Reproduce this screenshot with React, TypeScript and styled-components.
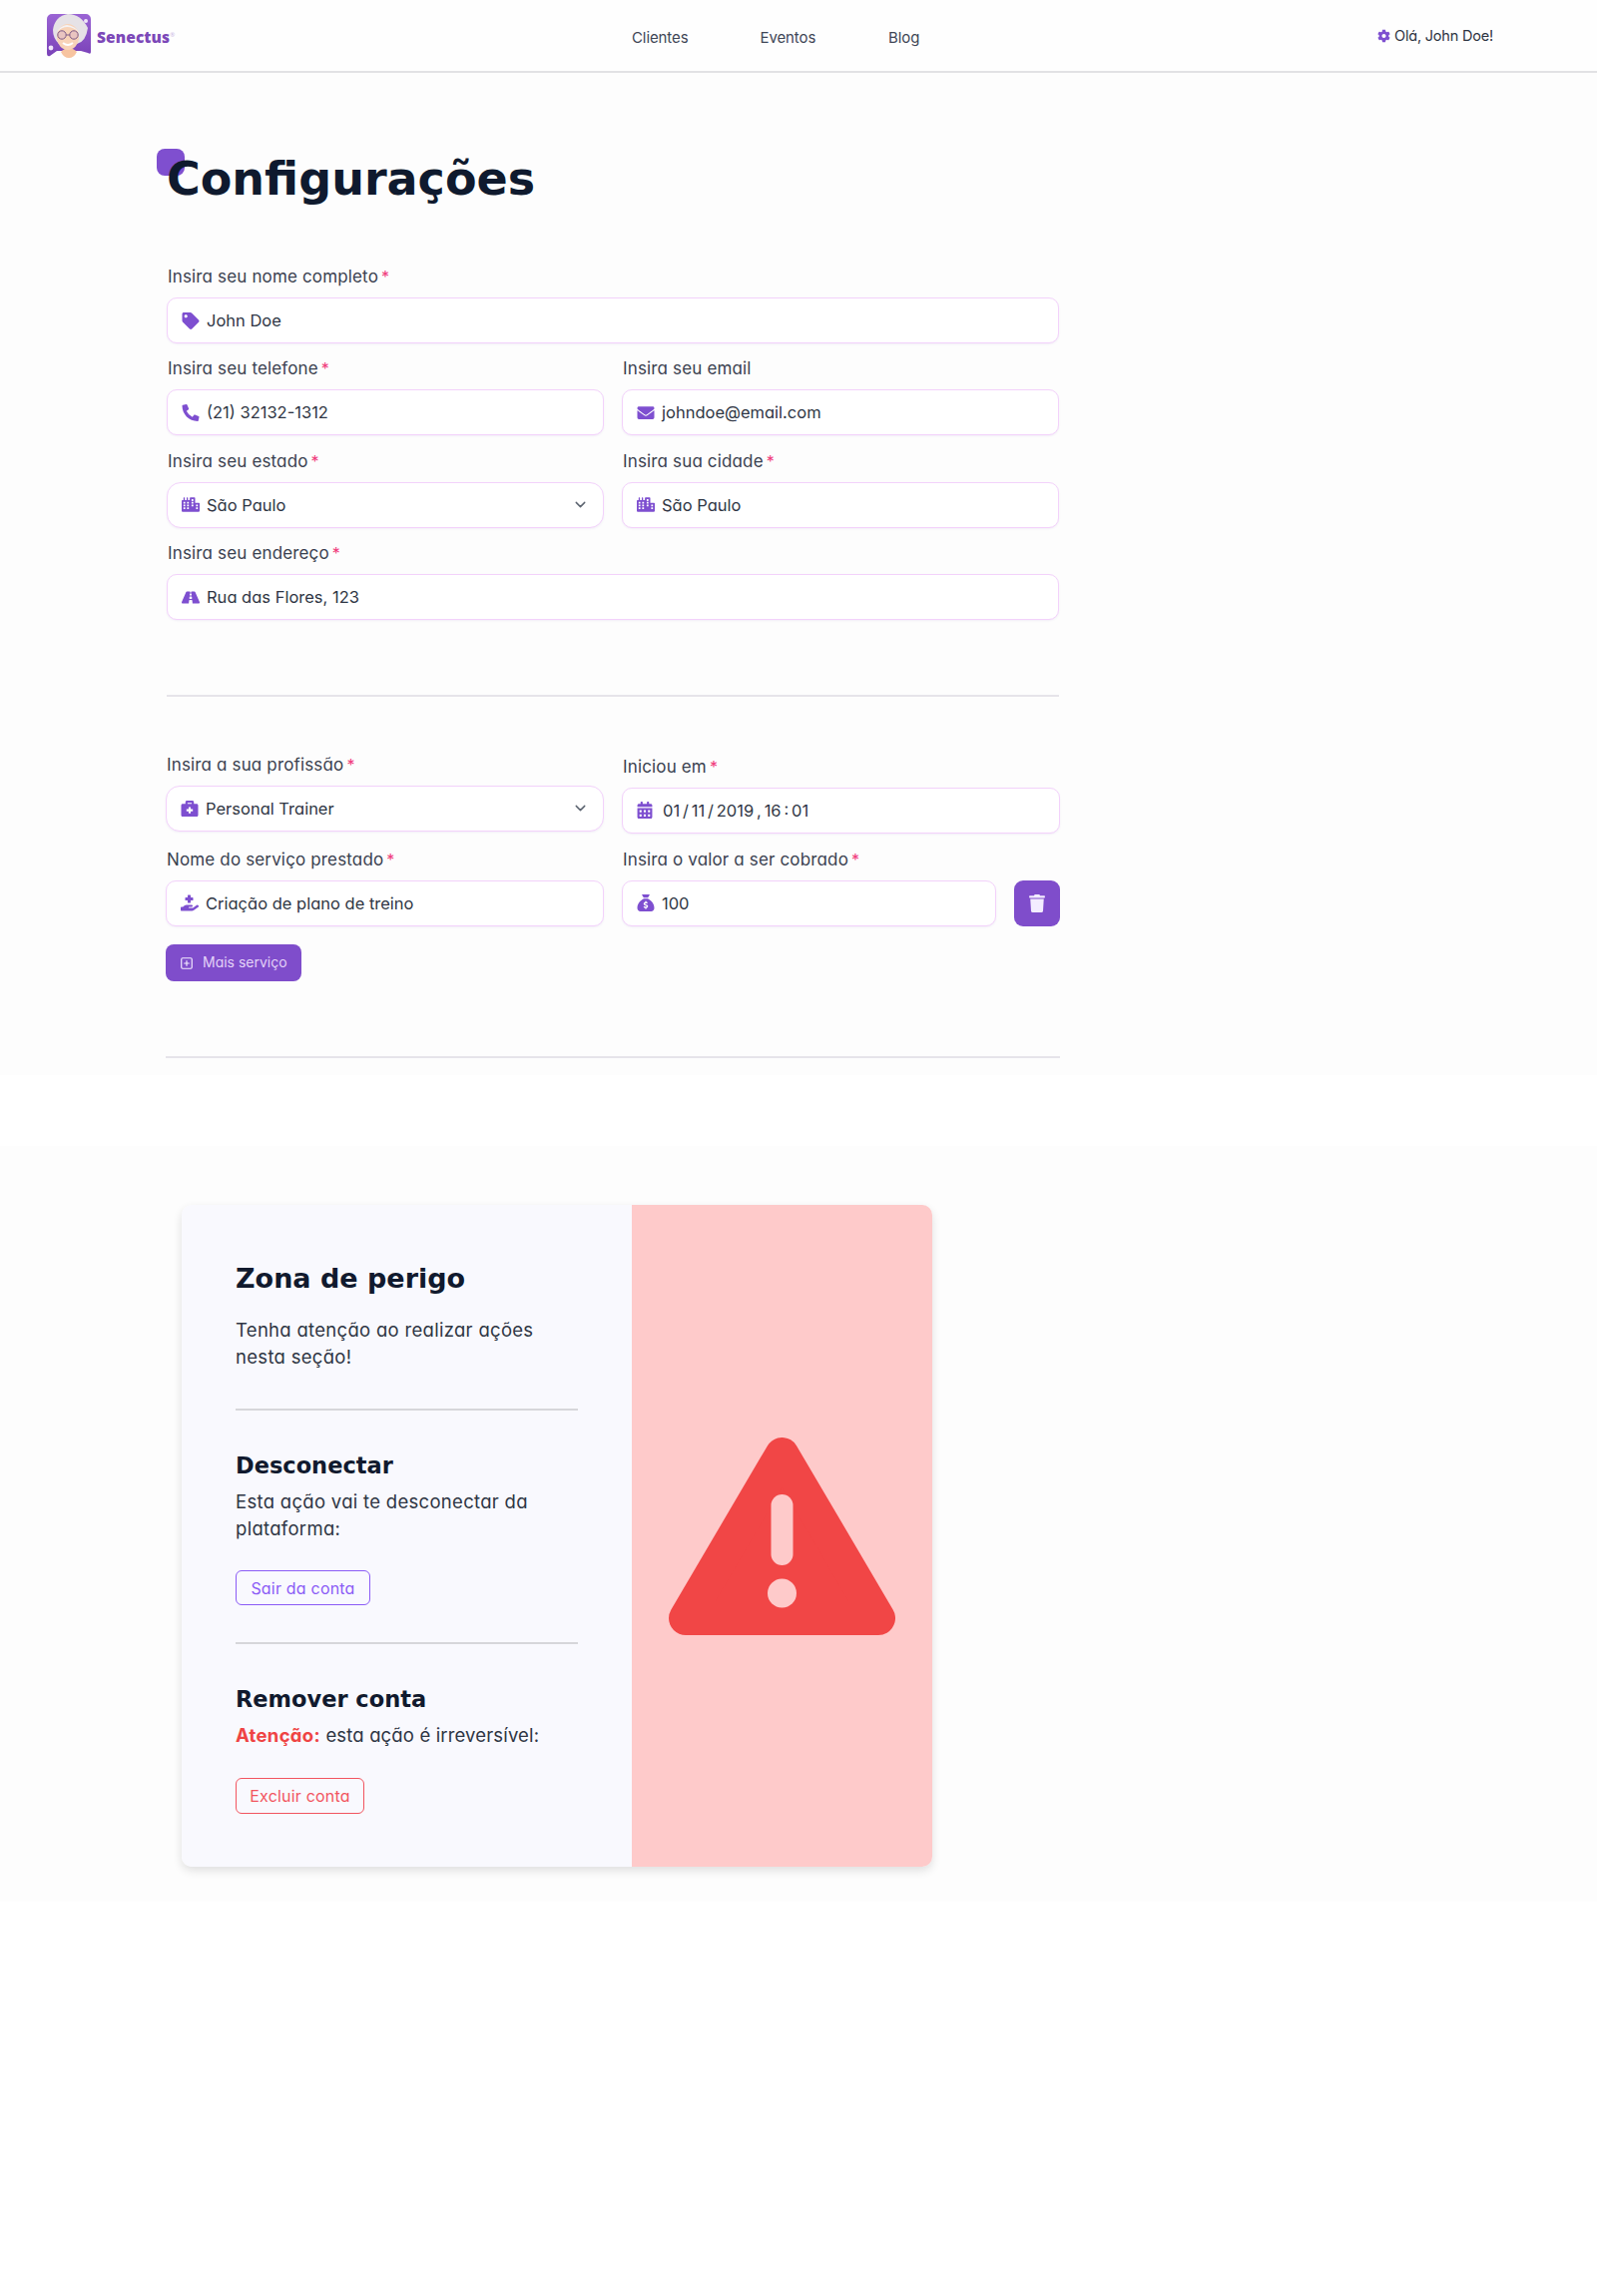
import React from "react";
import styled, { createGlobalStyle } from "styled-components";
import { FaTag, FaPhoneAlt, FaCity, FaRoad, FaEnvelope, FaBriefcaseMedical, FaHandHoldingMedical, FaCalendarAlt, FaTrash, FaCog } from "react-icons/fa";
import { FaSackDollar } from "react-icons/fa6";
import { FiPlusSquare, FiChevronDown } from "react-icons/fi";

const Global = createGlobalStyle`
  html, body { margin: 0; padding: 0; background: #ffffff; }
  body { font-family: Inter, "Liberation Sans", sans-serif; font-feature-settings: "cv11"; color: #1f2937; }
  * { box-sizing: border-box; }
`;

const Page = styled.div`width: 1600px; height: 2300px; background: #fff;`;

const Nav = styled.header`
  height: 73px; display: grid; grid-template-columns: 633px 747px 1fr; align-items: center;
  background: #fefefe; border-bottom: 2px solid #e2e2e4;
`;
const Brand = styled.div`display: flex; align-items: center; gap: 6px; padding-left: 47px;`;
const BrandName = styled.span`
  font: 800 15.5px "Open Sans", sans-serif; color: #7c48b8; letter-spacing: 0.1px; margin-top: 2px;
  sup { font-size: 6px; font-weight: 400; color: #c9b4e2; vertical-align: 6px; }
`;
const NavLinks = styled.nav`display: grid; grid-auto-flow: column; grid-auto-columns: 128.5px; justify-content: start; padding-top: 3px;`;
const NavLink = styled.a`font-size: 15px; color: #3f4656; letter-spacing: -0.1px;`;
const Greeting = styled.div`display: flex; align-items: center; gap: 4px; font-size: 14.500px; color: #2d3442; letter-spacing: -0.2px; margin-top: -1px; svg { color: #7e4fd0; width: 13px; height: 14px; margin-top: 2px; }`;

const FormSection = styled.section`height: 1004px; background: #fdfdfd; padding: 76px 0 0 167px;`;
const TitleWrap = styled.div`position: relative; height: 74px;`;
const Accent = styled.span`
  position: absolute; left: -10px; top: 0; width: 28px; height: 27px; border-radius: 8px; background: #7f4fcf;
`;
const Title = styled.h1`
  position: relative; margin: 0; padding-top: 1px; font: 700 46px/58px "DejaVu Sans", sans-serif; color: #0f1a2e;
`;
const Form = styled.div<{ $top?: number; $left?: number; $col: number }>`
  display: grid; grid-template-columns: ${(p) => p.$col}px ${(p) => p.$col}px; column-gap: 18px;
  margin-top: ${(p) => p.$top ?? 0}px; margin-left: ${(p) => p.$left ?? 0}px;
`;
const Field = styled.div<{ $wide?: boolean; $shift?: number; $h?: number }>`
  grid-column: ${(p) => (p.$wide ? "1 / 3" : "auto")};
  display: flex; flex-direction: column; height: ${(p) => p.$h ?? 92.4}px; padding-top: ${(p) => p.$shift ?? 0}px;
`;
const Label = styled.label`
  font-size: 17px; line-height: 24px; height: 24px; margin-bottom: 9px; padding-left: 1px; color: #3a4150; letter-spacing: 0.15px;
`;
const Star = styled.span`color: #f0397a; margin-left: 3px; font-size: 16px; letter-spacing: 0;`;
const Row = styled.div`display: flex; gap: 18px;`;
const Control = styled.div<{ $round?: boolean }>`
  flex: 1; height: 46px; display: flex; align-items: center; gap: 7px; padding: 0 14px;
  background: #fff; border: 1.5px solid #f3d2fb; border-radius: ${(p) => (p.$round ? 14 : 10)}px;
  box-shadow: 0 1px 2px rgba(120, 60, 180, 0.08);
  color: #2f3644; font-size: 16.500px; letter-spacing: 0;
  > svg:first-child { color: #7e4fd0; width: 18px; height: 17px; flex: none; }
`;
const Caret = styled(FiChevronDown)`margin-left: auto; color: #5c6470; width: 17px; height: 17px;`;
const DateText = styled.span`word-spacing: -1.8px;`;
const CalendarIcon = styled(FaCalendarAlt)`
  && { width: 13px; height: 15px; margin: 0 2px 0 -1px; }
`;
const TrashButton = styled.button`
  width: 46px; height: 46px; flex: none; border: 0; border-radius: 9px; background: #7f4dcb; color: #f3ecff;
  display: flex; align-items: center; justify-content: center; svg { width: 16px; height: 18px; }
`;
const AddButton = styled.button`
  width: 136px; height: 37px; margin-top: 2px; margin-left: -1px; border: 0; border-radius: 8px; background: #7f4dcb;
  display: flex; align-items: center; gap: 9px; padding: 0 14px; color: #e3d2f8; font: 14px Inter, sans-serif; font-feature-settings: "cv11";
  svg { width: 14px; height: 14px; color: #f3ecff; flex: none; margin-top: 1px; }
  span { margin-top: -2px; }
`;
const Rule = styled.hr<{ $top: number; $left?: number; $width: number }>`
  border: 0; height: 2px; background: #e6e4ea; margin: ${(p) => p.$top}px 0 0 ${(p) => p.$left ?? 0}px; width: ${(p) => p.$width}px;
`;

const DangerSection = styled.section`height: 757px; margin-top: 71px; background: #fdfdfd; padding: 59px 0 0 182px;`;
const Card = styled.div`
  width: 752px; height: 663px; display: flex; border-radius: 10px; overflow: hidden;
  box-shadow: 0 4px 10px rgba(0, 0, 0, 0.12);
`;
const CardBody = styled.div`width: 451px; background: #f9f9fe; padding: 55px 54px 0 54px;`;
const CardAside = styled.div`flex: 1; background: #fecaca; display: flex; align-items: center; justify-content: center;`;
const H2 = styled.h2`margin: 0; font: 700 27px/38px "DejaVu Sans", sans-serif; color: #111a2e;`;
const H3 = styled.h3`margin: 0; font: 700 22.500px/32px "DejaVu Sans", sans-serif; color: #111a2e;`;
const Lead = styled.p<{ $top: number; $lh: number }>`
  margin: ${(p) => p.$top}px 0 0; font-size: 18.500px; line-height: ${(p) => p.$lh}px; color: #2f3644; width: 343px; letter-spacing: 0.3px;
`;
const Strong = styled.strong`color: #ef4444; font-weight: 700;`;
const Tight = styled.span`letter-spacing: 0.15px;`;
const Divider = styled.hr<{ $top: number; $bottom: number }>`
  border: 0; height: 2px; background: #d6d6da; margin: ${(p) => p.$top}px 0 ${(p) => p.$bottom}px;
`;
const Outline = styled.button<{ $color: string; $w: number; $h: number; $top: number }>`
  display: block; width: ${(p) => p.$w}px; height: ${(p) => p.$h}px; margin-top: ${(p) => p.$top}px;
  background: transparent; border: 1.5px solid ${(p) => p.$color}; border-radius: 6px; color: ${(p) => p.$color};
  font: 16px Inter, sans-serif; font-feature-settings: "cv11"; padding: 0; letter-spacing: 0.2px;
`;

const Logo = () => (
  <svg width="44" height="44" viewBox="0 0 44 44">
    <defs>
      <linearGradient id="lg" x1="0" y1="0" x2="0" y2="1">
        <stop offset="0" stopColor="#9a64d4" />
        <stop offset="1" stopColor="#7a42b8" />
      </linearGradient>
    </defs>
    <path d="M5 0H39A5 5 0 0 1 44 5V38Q44 41 41 39L34 37H10L3 42Q0 43 0 39V5A5 5 0 0 1 5 0Z" fill="url(#lg)" />
    <circle cx="39" cy="7" r="2" fill="#efe5fa" />
    <circle cx="4" cy="34" r="2.4" fill="#efe5fa" />
    <path d="M14 38Q22 30 30 38Q27 44 22 44Q17 44 14 38Z" fill="#f7c4a0" />
    <path d="M6 16Q8 2 21 0Q34 0 41 14Q39 28 30 30H12Q6 24 6 16Z" fill="#e6e2e6" />
    <ellipse cx="21" cy="23" rx="11" ry="13" fill="#f8d3b8" />
    <path d="M10 18Q20 8 32 18Q28 12 20 11Q13 12 10 18Z" fill="#f4f2f4" />
    <circle cx="15" cy="21" r="4.2" fill="#e9c4c0" stroke="#7d5a86" strokeWidth="1" />
    <circle cx="27" cy="21" r="4.2" fill="#e9c4c0" stroke="#7d5a86" strokeWidth="1" />
    <path d="M19.2 21H22.8" stroke="#7d5a86" strokeWidth="1" />
    <path d="M16 29Q21 33 26 29" stroke="#fff" strokeWidth="2" fill="none" />
  </svg>
);

const WarningTriangle = () => (
  <svg width="227" height="198" viewBox="0 0 227 198">
    <path
      d="M113.500 17 L210 181 H17 Z"
      fill="#f14646" stroke="#f14646" strokeWidth="34" strokeLinejoin="round"
    />
    <rect x="102.500" y="57" width="22" height="71" rx="11" fill="#fecaca" />
    <circle cx="113.500" cy="156" r="14.500" fill="#fecaca" />
  </svg>
);

export default function App() {
  return (
    <Page>
      <Global />
      <Nav>
        <Brand>
          <Logo />
          <BrandName>Senectus<sup>®</sup></BrandName>
        </Brand>
        <NavLinks>
          <NavLink>Clientes</NavLink>
          <NavLink>Eventos</NavLink>
          <NavLink>Blog</NavLink>
        </NavLinks>
        <Greeting>
          <FaCog />
          Olá, John Doe!
        </Greeting>
      </Nav>

      <FormSection>
        <TitleWrap>
          <Accent />
          <Title>Configurações</Title>
        </TitleWrap>
        <Form $top={42} $col={438}>
          <Field $wide>
            <Label>Insira seu nome completo<Star>*</Star></Label>
            <Row><Control><FaTag /><span>John Doe</span></Control></Row>
          </Field>
          <Field>
            <Label>Insira seu telefone<Star>*</Star></Label>
            <Row><Control><FaPhoneAlt /><span>(21) 32132-1312</span></Control></Row>
          </Field>
          <Field>
            <Label>Insira seu email</Label>
            <Row><Control><FaEnvelope /><span>johndoe@email.com</span></Control></Row>
          </Field>
          <Field>
            <Label>Insira seu estado<Star>*</Star></Label>
            <Row><Control $round><FaCity /><span>São Paulo</span><Caret /></Control></Row>
          </Field>
          <Field>
            <Label>Insira sua cidade<Star>*</Star></Label>
            <Row><Control><FaCity /><span>São Paulo</span></Control></Row>
          </Field>
          <Field $wide>
            <Label>Insira seu endereço<Star>*</Star></Label>
            <Row><Control><FaRoad /><span>Rua das Flores, 123</span></Control></Row>
          </Field>
        </Form>
        <Rule $top={61} $width={894} />
        <Form $top={56} $left={-1} $col={439}>
          <Field $h={95}>
            <Label>Insira a sua profissão<Star>*</Star></Label>
            <Row><Control $round><FaBriefcaseMedical /><span>Personal Trainer</span><Caret /></Control></Row>
          </Field>
          <Field $h={95} $shift={2}>
            <Label>Iniciou em<Star>*</Star></Label>
            <Row><Control><CalendarIcon /><DateText>01 / 11 / 2019 , 16 : 01</DateText></Control></Row>
          </Field>
          <Field $h={95}>
            <Label>Nome do serviço prestado<Star>*</Star></Label>
            <Row><Control><FaHandHoldingMedical /><span>Criação de plano de treino</span></Control></Row>
          </Field>
          <Field $h={95}>
            <Label>Insira o valor a ser cobrado<Star>*</Star></Label>
            <Row>
              <Control><FaSackDollar /><span>100</span></Control>
              <TrashButton><FaTrash /></TrashButton>
            </Row>
          </Field>
        </Form>
        <AddButton><FiPlusSquare /><span>Mais serviço</span></AddButton>
        <Rule $top={75} $left={-1} $width={896} />
      </FormSection>

      <DangerSection>
        <Card>
          <CardBody>
            <H2>Zona de perigo</H2>
            <Lead $top={19} $lh={27}>Tenha atenção ao realizar ações nesta seção!</Lead>
            <Divider $top={38} $bottom={39} />
            <H3>Desconectar</H3>
            <Lead $top={7} $lh={27}>Esta ação vai te desconectar da plataforma:</Lead>
            <Outline $color="#8b5cf6" $w={135} $h={35} $top={28}>Sair da conta</Outline>
            <Divider $top={37} $bottom={39} />
            <H3>Remover conta</H3>
            <Lead $top={7} $lh={27}><Strong>Atenção:</Strong> <Tight>esta ação é irreversível:</Tight></Lead>
            <Outline $color="#f25560" $w={129} $h={36} $top={29}>Excluir conta</Outline>
          </CardBody>
          <CardAside><WarningTriangle /></CardAside>
        </Card>
      </DangerSection>
    </Page>
  );
}
